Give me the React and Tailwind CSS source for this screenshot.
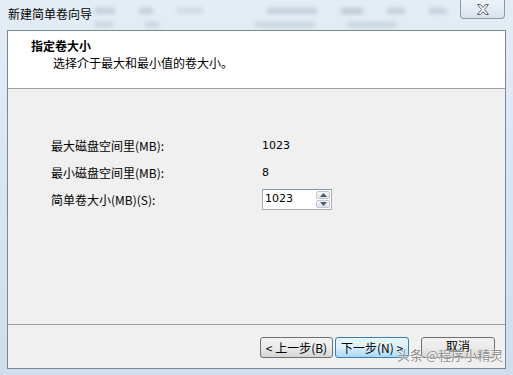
export default function App() {
  const font = { fontFamily: '"Noto Sans CJK SC", "Liberation Sans", sans-serif' };

  return (
    <div
      className="relative w-[513px] h-[375px] overflow-hidden bg-gradient-to-b from-[#e4edf6] via-[#d8e6f2] to-[#cfdeec] text-[12px] text-black flex flex-col"
      style={font}
    >
      {/* blurred glass behind the title bar */}
      <div className="absolute left-[95px] top-[8px] flex gap-6 blur-[2px] opacity-30">
        <div className="w-[20px] h-[6px] bg-[#7a8a9a]" />
        <div className="w-[14px] h-[6px] bg-[#7a8a9a]" />
        <div className="w-[26px] h-[5px] bg-[#9aaaba]" />
        <div className="w-[50px] h-[6px] ml-10 bg-[#7a8a9a]" />
        <div className="w-[22px] h-[6px] bg-[#6a7a8a]" />
        <div className="w-[18px] h-[6px] bg-[#7a8a9a]" />
        <div className="w-[18px] h-[6px] bg-[#7a8a9a]" />
        <div className="w-[30px] h-[6px] bg-[#9ab0c8]" />
      </div>
      <div className="absolute left-[95px] top-[22px] flex gap-8 blur-[2px] opacity-25">
        <div className="w-[18px] h-[5px] bg-[#7a8a9a]" />
        <div className="w-[14px] h-[5px] bg-[#7a8a9a]" />
        <div className="w-[60px] h-[5px] ml-16 bg-[#7a8a9a]" />
        <div className="w-[50px] h-[5px] bg-[#7a8a9a]" />
      </div>

      {/* title bar */}
      <div className="relative h-[30px] shrink-0 flex items-start pl-[8px] pt-[4px]">
        <span className="leading-[20px] text-[12px]">新建简单卷向导</span>
        <div className="absolute right-[8px] top-0 w-[45px] h-[19px] rounded-b-[4px] border border-t-0 border-[#8d9aa8] bg-gradient-to-b from-[#eef3f8] to-[#d9e3ee] flex items-center justify-center">
          <svg width="14" height="11" viewBox="0 0 14 11">
            <path
              d="M1.5 0.5 H4.5 L7 3.5 L9.5 0.5 H12.5 L8.5 5.5 L12.5 10.5 H9.5 L7 7.5 L4.5 10.5 H1.5 L5.5 5.5 Z"
              fill="#ffffff"
              stroke="#5a6470"
              strokeWidth="1"
            />
          </svg>
        </div>
      </div>

      {/* client area */}
      <div className="ml-[7px] mr-[7px] h-[339px] border border-[#7b8794] flex flex-col bg-[#f0f0f0]">
        {/* header */}
        <div className="h-[58px] shrink-0 bg-white border-b border-[#a0a0a0] pl-[23px] pt-[6px]">
          <div className="font-bold leading-[18px]">指定卷大小</div>
          <div className="pl-[22px] leading-[16px]">选择介于最大和最小值的卷大小。</div>
        </div>

        {/* body */}
        <div className="flex-1 pl-[43px] pt-[49px] flex flex-col">
          <div className="flex items-center h-[16px]">
            <span className="w-[211px]">最大磁盘空间里(MB):</span>
            <span className="text-[11px]" style={{ fontFamily: '"DejaVu Sans", sans-serif' }}>1023</span>
          </div>
          <div className="flex items-center h-[16px] mt-[11px]">
            <span className="w-[211px]">最小磁盘空间里(MB):</span>
            <span className="text-[11px]" style={{ fontFamily: '"DejaVu Sans", sans-serif' }}>8</span>
          </div>
          <div className="flex items-center mt-[8px]">
            <span className="w-[211px]">简单卷大小(MB)(S):</span>
            <div className="flex h-[21px] w-[70px] border border-[#abadb3] border-t-[#7f9db9] bg-white">
              <div
                className="flex-1 flex items-center pl-[2px] text-[11px]"
                style={{ fontFamily: '"DejaVu Sans", sans-serif' }}
              >
                1023
              </div>
              <div className="w-[16px] flex flex-col gap-px p-px">
                <div className="flex-1 flex items-center justify-center rounded-[2px] border border-[#c0c8d2] bg-gradient-to-b from-[#f6f8fa] to-[#dde3ea]">
                  <svg width="7" height="4" viewBox="0 0 7 4">
                    <path d="M0 4 L3.5 0 L7 4 Z" fill="#4d5a66" />
                  </svg>
                </div>
                <div className="flex-1 flex items-center justify-center rounded-[2px] border border-[#c0c8d2] bg-gradient-to-b from-[#f6f8fa] to-[#dde3ea]">
                  <svg width="7" height="4" viewBox="0 0 7 4">
                    <path d="M0 0 L3.5 4 L7 0 Z" fill="#4d5a66" />
                  </svg>
                </div>
              </div>
            </div>
          </div>
        </div>

        {/* footer */}
        <div className="h-[44px] shrink-0 border-t border-[#a0a0a0] flex items-start justify-end pr-[10px] pt-[12px]">
          <button className="w-[73px] h-[21px] rounded-[3px] border border-[#707070] bg-gradient-to-b from-[#f2f2f2] via-[#ebebeb] to-[#d4d4d4] flex items-center justify-center leading-none">
            &lt; 上一步(B)
          </button>
          <button className="ml-[2px] w-[74px] h-[21px] rounded-[3px] border border-[#3c7fb1] bg-gradient-to-b from-[#eaf6fd] via-[#d9f0fc] to-[#a7d9f5] flex items-center justify-center leading-none">
            下一步(N) &gt;
          </button>
          <button className="ml-[12px] w-[74px] h-[21px] rounded-[3px] border border-[#707070] bg-gradient-to-b from-[#f2f2f2] via-[#ebebeb] to-[#d4d4d4] flex items-start justify-center leading-[14px] pt-[1px]">
            取消
          </button>
        </div>
      </div>

      {/* watermark */}
      <div
        className="absolute left-[397px] top-[347px] text-[13px] leading-[16px] text-[#8c8c8c] whitespace-nowrap"
        style={{ textShadow: "0 0 2px #ffffff, 0 0 1px #ffffff" }}
      >
        头条 @程序小精灵
      </div>
    </div>
  );
}
